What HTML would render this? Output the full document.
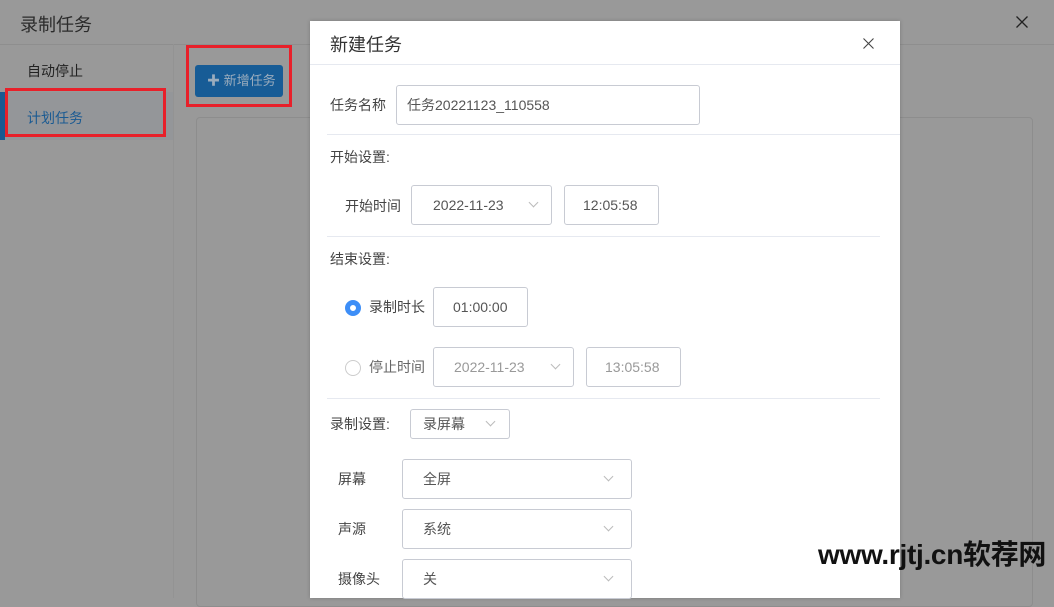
<!DOCTYPE html><html><head><meta charset="utf-8"><style>
*{margin:0;padding:0;box-sizing:border-box}
body{width:1054px;height:598px;overflow:hidden;background:#999;font-family:"Liberation Sans","Noto Sans CJK SC",sans-serif;position:relative;color:#333}
.a{position:absolute}
.t{font-size:14px;white-space:nowrap}
.box{position:absolute;border:1px solid #c8cbd3;border-radius:3px;background:#fff;font-size:14px;color:#555;display:flex;align-items:center}
.chev{position:absolute;width:7px;height:7px;border-right:1px solid #bbb;border-bottom:1px solid #bbb;transform:rotate(45deg)}
.hl{position:absolute;height:1px;background:#e6e9f0}
</style></head><body>
<div class="a" style="left:0;top:44px;width:1054px;height:1px;background:#8e8e8e"></div>
<div class="a" style="left:173px;top:44px;width:1px;height:554px;background:#939393"></div>
<div class="a t" style="left:20px;top:11px;font-size:18px;color:#2b2b2b">录制任务</div>
<svg class="a" style="left:1016px;top:16px" width="12" height="12"><path d="M0.5 0.5L11.5 11.5M11.5 0.5L0.5 11.5" stroke="#222" stroke-width="1.3"/></svg>
<div class="a t" style="left:27px;top:61px;color:#222">自动停止</div>
<div class="a" style="left:0;top:92px;width:173px;height:48px;background:#949699"></div>
<div class="a" style="left:0;top:92px;width:5px;height:48px;background:#1a5a92"></div>
<div class="a t" style="left:27px;top:108px;color:#1a5a92">计划任务</div>
<div class="a" style="left:5px;top:88px;width:161px;height:49px;border:3px solid #e8202a"></div>
<div class="a" style="left:195px;top:65px;width:88px;height:32px;background:#175c96;border-radius:3px;color:#9aacbd;font-size:13px;line-height:32px;padding-left:12px">✚ 新增任务</div>
<div class="a" style="left:186px;top:45px;width:106px;height:62px;border:3px solid #e8202a"></div>
<div class="a" style="left:196px;top:117px;width:837px;height:490px;border:1px solid #8d8d8d;border-radius:4px"></div>

<div class="a" style="left:310px;top:21px;width:590px;height:577px;background:#fff;box-shadow:0 0 4px rgba(0,0,0,.2)">
<div class="a t" style="left:20px;top:10px;font-size:18px;color:#333">新建任务</div>
<svg class="a" style="left:553px;top:17px" width="11" height="11"><path d="M0.5 0.5L10.5 10.5M10.5 0.5L0.5 10.5" stroke="#444" stroke-width="1.1"/></svg>
<div class="hl" style="left:0;top:43px;width:590px"></div>
<div class="a t" style="left:20px;top:74px;color:#444">任务名称</div>
<div class="box" style="left:86px;top:64px;width:304px;height:40px;padding-left:10px">任务20221123_110558</div>
<div class="hl" style="left:17px;top:113px;width:573px"></div>
<div class="a t" style="left:20px;top:126px;color:#444">开始设置:</div>
<div class="a t" style="left:35px;top:175px;color:#444">开始时间</div>
<div class="box" style="left:101px;top:164px;width:141px;height:40px;padding-left:21px">2022-11-23<div class="chev" style="left:118px;top:13px"></div></div>
<div class="box" style="left:254px;top:164px;width:95px;height:40px;padding-left:18px">12:05:58</div>
<div class="hl" style="left:17px;top:215px;width:553px"></div>
<div class="a t" style="left:20px;top:228px;color:#444">结束设置:</div>
<div class="a" style="left:35px;top:279px;width:16px;height:16px;border-radius:50%;border:5px solid #3d8ef7"></div>
<div class="a t" style="left:59px;top:276px;color:#444">录制时长</div>
<div class="box" style="left:123px;top:266px;width:95px;height:40px;padding-left:19px">01:00:00</div>
<div class="a" style="left:35px;top:339px;width:16px;height:16px;border-radius:50%;border:1px solid #ccc"></div>
<div class="a t" style="left:59px;top:336px;color:#666">停止时间</div>
<div class="box" style="left:123px;top:326px;width:141px;height:40px;padding-left:20px;color:#999">2022-11-23<div class="chev" style="left:118px;top:13px"></div></div>
<div class="box" style="left:276px;top:326px;width:95px;height:40px;padding-left:18px;color:#999">13:05:58</div>
<div class="hl" style="left:17px;top:377px;width:553px"></div>
<div class="a t" style="left:20px;top:393px;color:#444">录制设置:</div>
<div class="box" style="left:100px;top:388px;width:100px;height:30px;padding-left:12px">录屏幕<div class="chev" style="left:76px;top:8px"></div></div>
<div class="a t" style="left:28px;top:448px;color:#444">屏幕</div>
<div class="box" style="left:92px;top:438px;width:230px;height:40px;padding-left:20px">全屏<div class="chev" style="left:202px;top:13px"></div></div>
<div class="a t" style="left:28px;top:498px;color:#444">声源</div>
<div class="box" style="left:92px;top:488px;width:230px;height:40px;padding-left:20px">系统<div class="chev" style="left:202px;top:13px"></div></div>
<div class="a t" style="left:28px;top:548px;color:#444">摄像头</div>
<div class="box" style="left:92px;top:538px;width:230px;height:40px;padding-left:20px">关<div class="chev" style="left:202px;top:13px"></div></div>
</div>
<div class="a t" style="left:818px;top:533px;font-size:28px;font-weight:bold;color:#111;letter-spacing:-0.3px">www.rjtj.cn软荐网</div>
</body></html>
